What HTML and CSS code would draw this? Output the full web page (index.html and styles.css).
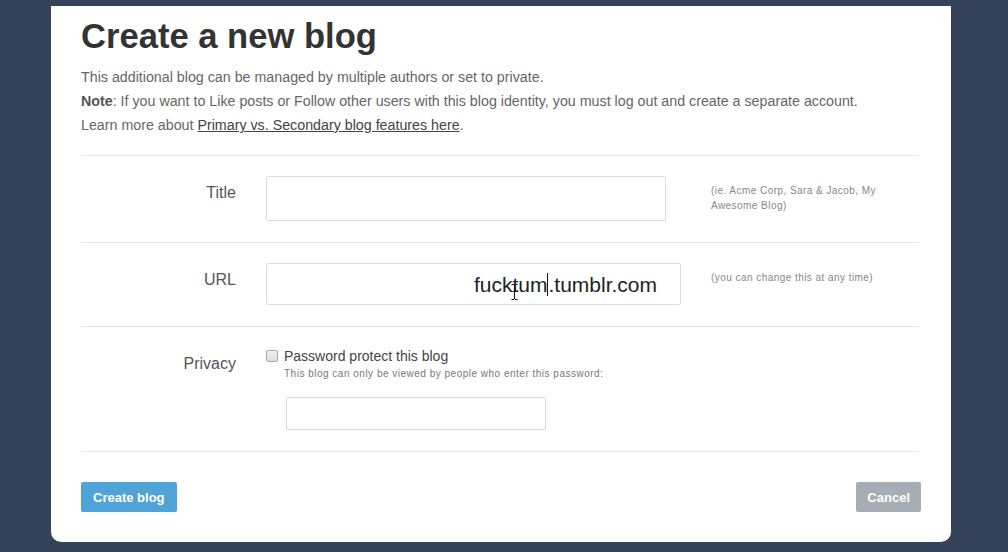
FILE: index.html
```html
<!DOCTYPE html>
<html>
<head>
<meta charset="utf-8">
<link rel="stylesheet" href="styles.css">
</head>
<body>
<div class="card">
  <h1 class="heading">Create a new blog</h1>
  <div class="intro">
    <p>This additional blog can be managed by multiple authors or set to private.</p>
    <p><b>Note</b>: If you want to Like posts or Follow other users with this blog identity, you must log out and create a separate account.</p>
    <p>Learn more about <a href="#" class="link">Primary vs. Secondary blog features here</a>.</p>
  </div>

  <div class="row row-title">
    <div class="label">Title</div>
    <div class="field"><div class="input input-title"></div></div>
    <div class="hint">(ie. Acme Corp, Sara &amp; Jacob, My Awesome Blog)</div>
  </div>

  <div class="row row-url">
    <div class="label">URL</div>
    <div class="field">
      <div class="input input-url"><span class="typed">fucktum</span><span class="suffix">.tumblr.com</span>
        <svg class="ibeam" width="7" height="16" viewBox="0 0 7 16"><path d="M0.5 0.5h2.5M4 0.5h2.5M3.5 1v14M0.5 15.5h2.5M4 15.5h2.5M1.5 7.5h4" stroke="#111" stroke-width="1" fill="none"/></svg>
      </div>
    </div>
    <div class="hint">(you can change this at any time)</div>
  </div>

  <div class="row row-privacy">
    <div class="label">Privacy</div>
    <div class="field">
      <div class="check-line"><span class="checkbox"></span><span class="check-text">Password protect this blog</span></div>
      <div class="subtext">This blog can only be viewed by people who enter this password:</div>
      <div class="input input-pass"></div>
    </div>
  </div>

  <div class="footer">
    <button class="btn btn-create">Create blog</button>
    <button class="btn btn-cancel">Cancel</button>
  </div>
</div>
</body>
</html>
```

FILE: styles.css
```css
html, body {
  margin: 0;
  padding: 0;
}
body {
  background: #34435a;
  font-family: "Liberation Sans", Arial, sans-serif;
  padding-top: 6px;
  height: 552px;
  box-sizing: border-box;
  overflow: hidden;
}
.card {
  margin-left: 51px;
  width: 900px;
  box-sizing: border-box;
  background: #fff;
  padding: 10px 30px 30px 30px;
  border-radius: 0 0 10px 10px;
}
.heading {
  margin: 0;
  font-size: 34.6px;
  line-height: 40px;
  font-weight: bold;
  color: #333;
}
.intro {
  margin-top: 9px;
  padding-bottom: 18px;
  margin-right: 2px;
  border-bottom: 1px solid #e4e4e4;
}
.intro p {
  margin: 0;
  font-size: 14.25px;
  line-height: 24px;
  color: #666;
}
.intro b {
  color: #555;
}
.link {
  color: #444;
  text-decoration: underline;
}
.row {
  display: flex;
  padding: 20px 0 21px;
  margin-right: 2px;
  border-bottom: 1px solid #e4e4e4;
}
.label {
  width: 155px;
  flex: none;
  text-align: right;
  font-size: 16px;
  line-height: 20px;
  padding-top: 7px;
  color: #555;
  margin-right: 30px;
}
.field {
  width: 415px;
  flex: none;
  margin-right: 30px;
}
.input {
  box-sizing: border-box;
  border: 1px solid #dcdcdc;
  border-radius: 2px;
  background: #fff;
}
.input-title {
  width: 400px;
  height: 45px;
}
.input-url {
  position: relative;
  width: 415px;
  height: 42px;
  text-align: right;
  padding-right: 23px;
  font-size: 21px;
  line-height: 41px;
  color: #222;
}
.typed {
  border-right: 1px solid #111;
}
.ibeam {
  position: absolute;
  left: 244px;
  top: 20px;
}
.hint {
  width: 206px;
  font-size: 10px;
  letter-spacing: 0.45px;
  line-height: 15px;
  color: #888;
  padding-top: 7px;
}
.check-line {
  display: flex;
  align-items: center;
  height: 18px;
  margin-top: 0;
}
.checkbox {
  width: 12px;
  height: 12px;
  box-sizing: border-box;
  border: 1px solid #a8a8a8;
  border-radius: 2px;
  background: linear-gradient(#f2f2f2, #dcdcdc);
  margin-right: 6px;
}
.check-text {
  font-size: 14px;
  color: #444;
}
.subtext {
  margin-left: 18px;
  margin-top: 2px;
  font-size: 10px;
  letter-spacing: 0.5px;
  line-height: 14px;
  color: #777;
}
.input-pass {
  margin-left: 20px;
  margin-top: 16px;
  width: 260px;
  height: 33px;
}
.footer {
  display: flex;
  justify-content: space-between;
  padding-top: 30px;
}
.btn {
  height: 30px;
  border: none;
  border-radius: 2px;
  padding: 0 12px;
  color: #fff;
  font-family: "Liberation Sans", Arial, sans-serif;
  font-weight: bold;
  font-size: 13px;
}
.btn-create {
  background: #4fa3d7;
}
.btn-cancel {
  background: #a6adb4;
  padding: 0 11px;
}
```
